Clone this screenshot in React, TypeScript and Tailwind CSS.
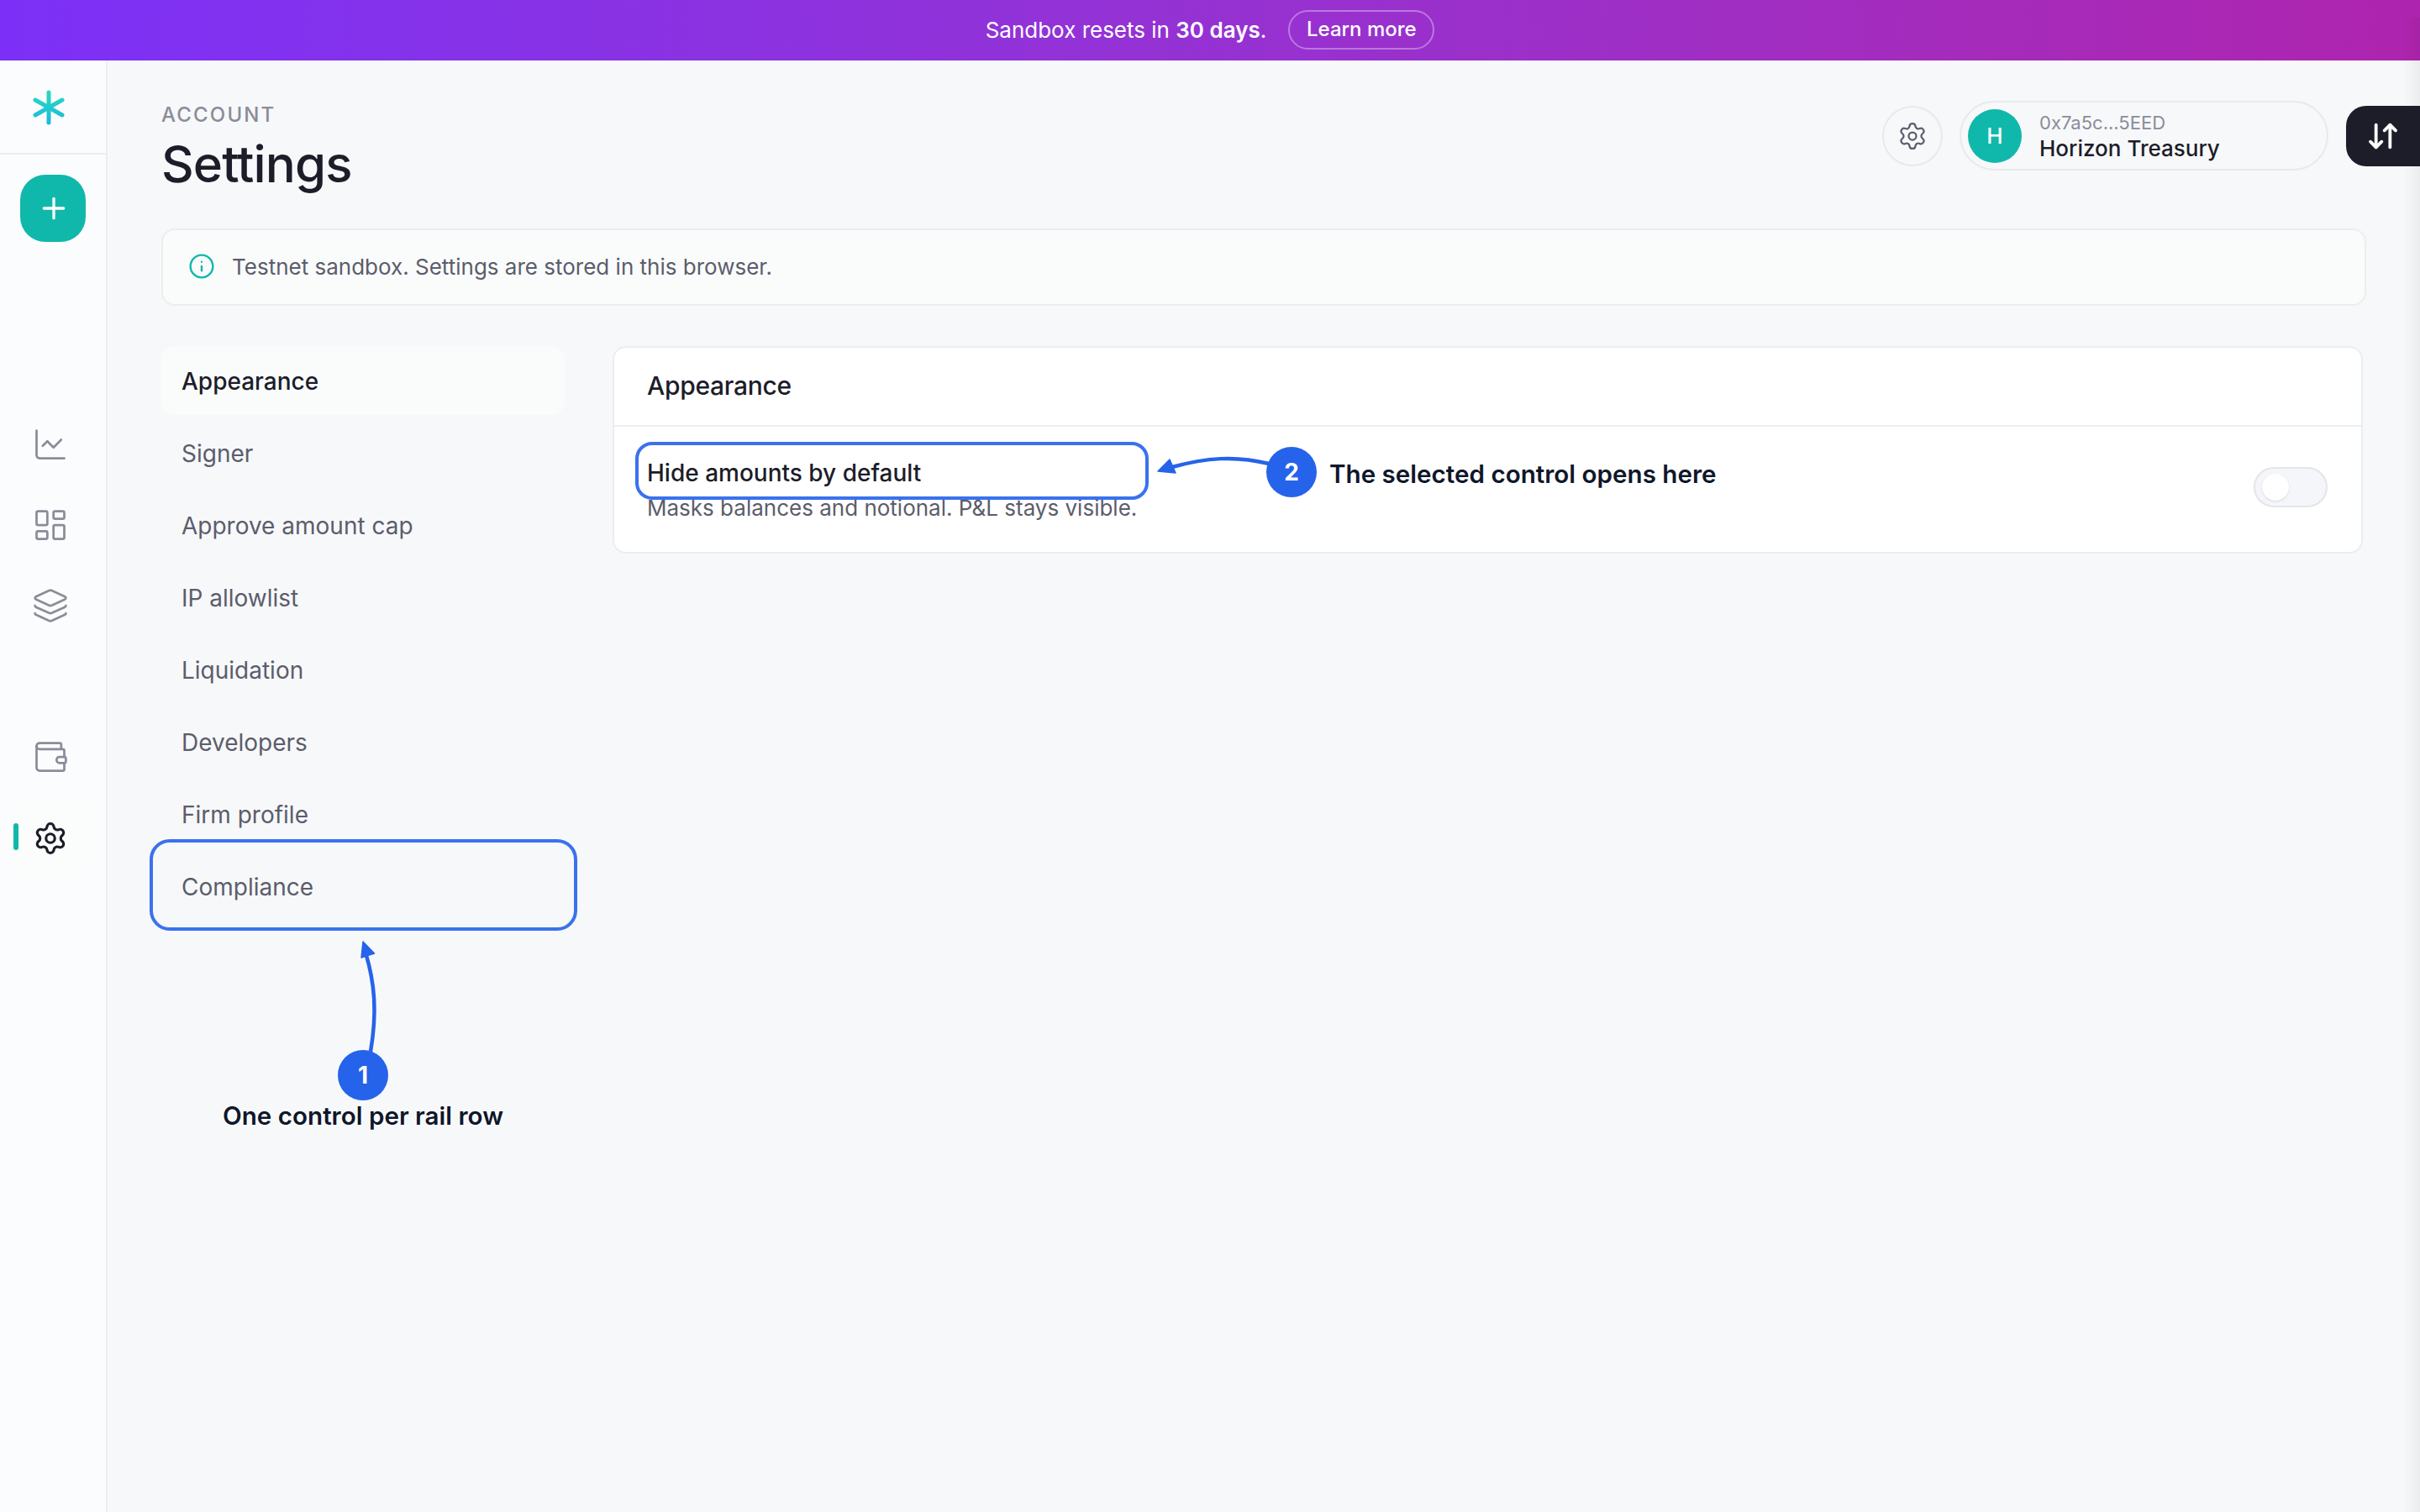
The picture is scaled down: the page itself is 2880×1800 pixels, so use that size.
import {
  ArrowDownUp,
  ChartLine,
  Info,
  Layers,
  LayoutDashboard,
  Plus,
  Settings,
  Wallet,
} from "lucide-react";

const railRows = [
  "Appearance",
  "Signer",
  "Approve amount cap",
  "IP allowlist",
  "Liquidation",
  "Developers",
  "Firm profile",
  "Compliance",
];

function LogoMark() {
  return (
    <svg width="44" height="46" viewBox="0 0 44 46" fill="none" stroke="url(#logo-grad)" strokeWidth="5" strokeLinecap="round">
      <defs>
        <linearGradient id="logo-grad" gradientUnits="userSpaceOnUse" x1="22" y1="2" x2="22" y2="44">
          <stop offset="0" stopColor="#2dd9bf" />
          <stop offset="1" stopColor="#18b9dc" />
        </linearGradient>
      </defs>
      <path d="M22 5v36" />
      <path d="M6 14l32 18" />
      <path d="M38 14L6 32" />
    </svg>
  );
}

function RailIcon({ children, active }: { children: React.ReactNode; active?: boolean }) {
  return (
    <div className={`relative flex h-[88px] w-[94px] items-center rounded-[20px] pl-[22px] ${active ? "bg-[#fbfcfc] text-[#1c1d29]" : "text-[#8b8c99]"}`}>
      {active && <span className="absolute left-0 top-[27px] h-[32px] w-[6px] rounded-[3px] bg-[#10b8ab]" />}
      {children}
    </div>
  );
}

export default function App() {
  return (
    <div className="relative flex h-screen w-full flex-col overflow-hidden bg-[#f7f8fa] font-['Inter',sans-serif] text-[#1c1d29]">
      <div className="flex h-[72px] shrink-0 items-center justify-center gap-[26px] bg-gradient-to-r from-[#7c30f7] to-[#ae24ae] pb-[2px] text-[26px] text-white">
        <span>
          Sandbox resets in <b className="font-semibold">30 days</b>.
        </span>
        <button className="flex h-[47px] w-[174px] items-center justify-center rounded-full border-2 border-white/35 text-[24px] font-medium">
          Learn more
        </button>
      </div>

      <div className="flex min-h-0 flex-1">
        <aside className="flex w-[128px] shrink-0 flex-col border-r-2 border-[#ecedf0] bg-[#fbfcfd]">
          <div className="flex h-[112px] items-center border-b-2 border-[#ecedf0] pl-[36px] pt-[1px]">
            <LogoMark />
          </div>
          <button className="ml-[24px] mt-[24px] flex h-[80px] w-[78px] items-center justify-center rounded-[30px] bg-[#10b8ab] pl-[2px] text-white">
            <Plus size={40} strokeWidth={2} />
          </button>
          <div className="ml-[16px] mt-[197px] flex flex-col gap-[8px]">
            <RailIcon><ChartLine size={44} strokeWidth={1.5} /></RailIcon>
            <RailIcon><LayoutDashboard size={44} strokeWidth={1.5} /></RailIcon>
            <RailIcon><Layers size={44} strokeWidth={1.5} /></RailIcon>
          </div>
          <div className="ml-[16px] mt-[92px] flex flex-col gap-[8px]">
            <RailIcon><Wallet size={44} strokeWidth={1.5} /></RailIcon>
            <RailIcon active><Settings size={42} strokeWidth={1.8} className="ml-[1px] mt-[1px]" /></RailIcon>
          </div>
        </aside>

        <main className="min-w-0 flex-1 px-[64px] pt-[49px]">
          <div className="flex items-start justify-between">
            <div>
              <div className="text-[24px] font-medium leading-[32px] tracking-[0.09em] text-[#8b8c99]">ACCOUNT</div>
              <h1 className="mt-[10px] text-[60px] font-medium leading-[64px] tracking-[-0.015em]">Settings</h1>
            </div>
            <div className="-mr-[96px] -mt-px flex items-center">
              <button className="flex h-[72px] w-[72px] items-center justify-center rounded-full border-2 border-[#e8e9ec] text-[#5b5d6b]">
                <Settings size={36} strokeWidth={1.5} />
              </button>
              <div className="ml-[20px] flex h-[83px] w-[439px] items-center rounded-full border-2 border-[#e8e9ec] pl-[8px]">
                <div className="flex h-[64px] w-[64px] items-center justify-center rounded-full bg-[#10b8ab] text-[26px] font-medium text-white">H</div>
                <div className="ml-[21px] pt-[2px]">
                  <div className="text-[22px] leading-[28px] text-[#8b8c99]">0x7a5c...5EED</div>
                  <div className="text-[26px] font-medium leading-[34px]">Horizon Treasury</div>
                </div>
              </div>
              <button className="relative z-10 ml-[21px] flex h-[72px] w-[120px] items-center rounded-[24px] bg-[#1c1d29] pl-[24px] text-white">
                <ArrowDownUp size={40} strokeWidth={2.3} />
              </button>
            </div>
          </div>

          <div className="mt-[45px] flex h-[92px] items-center gap-[20px] rounded-[16px] border-2 border-[#ecedf0] bg-[#fafbfb] pb-[2px] pl-[30px] text-[26px] text-[#5b5d6b]">
            <Info size={32} strokeWidth={1.8} className="text-[#10b8ab]" />
            <span>Testnet sandbox. Settings are stored in this browser.</span>
          </div>

          <div className="mr-[4px] mt-[48px] flex items-start gap-[57px]">
            <nav className="flex w-[480px] shrink-0 flex-col gap-[4px]">
              {railRows.map((row, i) => (
                <div
                  key={row}
                  className={`flex h-[82px] items-center rounded-[16px] px-[24px] pt-[2px] text-[28px] ${i === 0 ? "bg-[#fafbfb] font-medium text-[#1c1d29]" : "text-[#5b5d6b]"}`}
                >
                  {row}
                </div>
              ))}
            </nav>

            <section className="min-w-0 flex-1 rounded-[16px] border-2 border-[#ecedf0] bg-white">
              <div className="flex h-[94px] items-center border-b-2 border-[#ecedf0] px-[39px] pb-[1px] text-[30px] font-medium tracking-[-0.01em]">Appearance</div>
              <div className="flex items-center justify-between pb-[34px] pl-[39px] pr-[40px] pt-[35px]">
                <div>
                  <div className="text-[28px] font-medium leading-[40px]">Hide amounts by default</div>
                  <div className="mt-[4px] text-[26px] leading-[36px] text-[#5b5d6b]">Masks balances and notional. P&amp;L stays visible.</div>
                </div>
                <div className="-mt-[6px] flex h-[48px] w-[88px] items-center rounded-full border-2 border-[#e4e5ea] bg-[#f5f6f9] pl-[8px]">
                  <span className="h-[32px] w-[32px] rounded-full bg-white shadow-sm" />
                </div>
              </div>
            </section>
          </div>
        </main>
      </div>

      {/* fade on the right edge */}
      <div className="absolute bottom-0 right-0 top-[20px] w-[20px] bg-gradient-to-r from-transparent to-black/5" />

      {/* walkthrough annotations */}
      <div className="absolute left-[178px] top-[999px] h-[109px] w-[509px] rounded-[24px] border-4 border-[#3a72ee]" />
      <div className="absolute left-[756px] top-[526px] h-[69px] w-[611px] rounded-[20px] border-4 border-[#3a72ee]" />

      <svg className="absolute left-0 top-0" width="2880" height="1800" fill="none">
        <path d="M441 1252C449 1205 446 1170 435 1134" stroke="#2563eb" strokeWidth="4.500" />
        <path d="M432 1121L445.500 1135 430 1140z" fill="#2563eb" stroke="#2563eb" strokeWidth="1.500" strokeLinejoin="round" />
        <path d="M1510 552C1470 542 1435 545 1395 556" stroke="#2563eb" strokeWidth="4.500" />
        <path d="M1378 561L1392 547 1399 563z" fill="#2563eb" stroke="#2563eb" strokeWidth="1.500" strokeLinejoin="round" />
      </svg>

      <div className="absolute left-[402px] top-[1250px] flex h-[60px] w-[60px] items-center justify-center rounded-full bg-[#2563eb] text-[28px] font-bold text-white">1</div>
      <div className="absolute left-[232px] top-[1308px] w-[400px] text-center text-[29.6px] font-semibold leading-[40px] text-[#0f172a] [text-shadow:0_0_4px_#fff,0_0_4px_#fff]">
        One control per rail row
      </div>
      <div className="absolute left-[1507px] top-[532px] flex h-[60px] w-[60px] items-center justify-center rounded-full bg-[#2563eb] text-[28px] font-bold text-white">2</div>
      <div className="absolute left-[1582px] top-[544px] text-[29.6px] font-semibold leading-[40px] text-[#0f172a] [text-shadow:0_0_4px_#fff,0_0_4px_#fff]">
        The selected control opens here
      </div>
    </div>
  );
}
